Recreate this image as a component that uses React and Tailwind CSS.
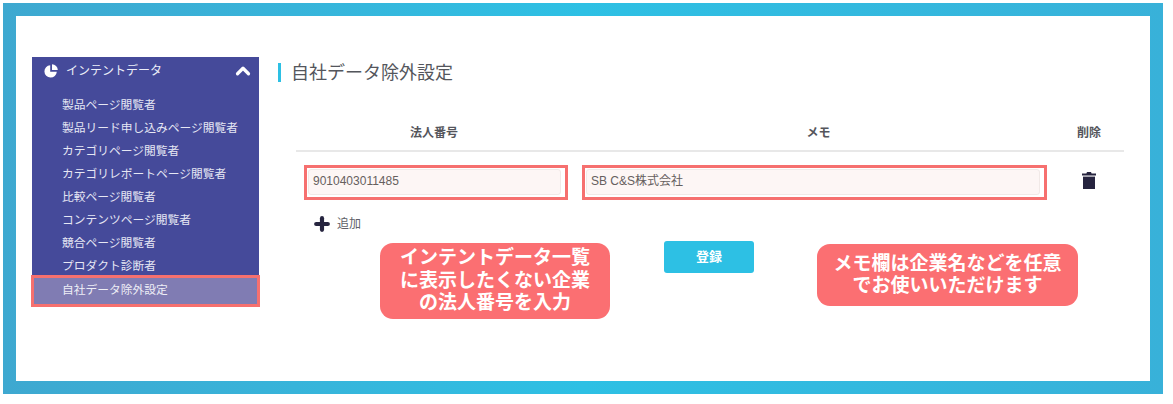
import { ChevronUp, Plus } from "lucide-react";

const FONT = "font-['Liberation_Sans','Noto_Sans_CJK_JP',sans-serif]";

const menuItems = [
  "製品ページ閲覧者",
  "製品リード申し込みページ閲覧者",
  "カテゴリページ閲覧者",
  "カテゴリレポートページ閲覧者",
  "比較ページ閲覧者",
  "コンテンツページ閲覧者",
  "競合ページ閲覧者",
  "プロダクト診断者",
];

const PieIcon = () => (
  <svg width="14" height="14" viewBox="0 0 14 14" fill="#fff">
    <path d="M6.2 1.2v6.6h6.6A6.2 6.2 0 1 1 6.2 1.2z" />
    <path d="M8 0.2A6 6 0 0 1 13.8 6H8z" />
  </svg>
);

const TrashIcon = () => (
  <svg width="14" height="17" viewBox="0 0 14 17" fill="#26243f">
    <path d="M5 0h4l.6 1.4H14v2H0v-2h4.4z" />
    <path d="M1 4.6h12V17H1z" />
  </svg>
);

const Sidebar = () => (
  <aside className="w-[227px] shrink-0 flex flex-col">
    <div className="bg-[#454a9a] h-[218px] flex flex-col">
      <div className="flex shrink-0 items-center h-[28px] pl-[12px] pr-[5px] text-white">
        <PieIcon />
        <span className="ml-[8px] text-[12px] text-[#eceef8]">インテントデータ</span>
        <ChevronUp size={22} strokeWidth={3.5} className="ml-auto" />
      </div>
      <ul className="shrink-0 pl-[30px] pt-[8px]">
        {menuItems.map((item) => (
          <li key={item} className="h-[23px] leading-[23px] text-[11.75px] text-[#e6e7f4] whitespace-nowrap">
            {item}
          </li>
        ))}
      </ul>
    </div>
    <div className="relative -mx-[1px] h-[32px] border-[3px] border-[#f6706f] bg-[#807cb3] pl-[28px] leading-[23px] text-[11.75px] text-[#eeeef6]">
      自社データ除外設定
    </div>
  </aside>
);

const Field = ({ value, className }) => (
  <div className={`h-[35px] border-[3px] border-[#f6706f] p-[1px] pb-[2px] pr-[4px] ${className}`}>
    <div className="h-full rounded-[3px] border border-[#f1e9e7] bg-[#fdf6f5] pl-[4px] pb-[3px] flex items-center text-[12px] text-[#66605e]">
      {value}
    </div>
  </div>
);

const App = () => (
  <div className={`${FONT} w-[1173px] h-[404px] bg-white pt-[3px] pl-[3px]`}>
    <div className="w-[1160px] h-[391px] p-[13px] bg-gradient-to-r from-[#3ea8d0] via-[#2dc0e4] to-[#38b1d9]">
      <div className="relative w-full h-full bg-white flex pl-[16px] pt-[41px]">
        <Sidebar />

        <main className="ml-[19px] flex-1 flex flex-col">
          <div className="flex items-center h-[19px] mt-[6px] border-l-[3px] border-[#2dc0e4] pl-[10px] pt-[2px] text-[18px] text-[#54565c]">
            自社データ除外設定
          </div>

          <div className="ml-[18px] mr-[26px] mt-[40px]">
            <div className="h-[30px] border-b-[2px] border-[#e8e8e8] flex pt-[2px] text-[12px] font-bold text-[#55565c]">
              <div className="w-[276px] text-center">法人番号</div>
              <div className="w-[465px] text-center pl-[28px]">メモ</div>
              <div className="ml-auto mr-[23px]">削除</div>
            </div>

            <div className="flex items-center mt-[13px] pl-[8px]">
              <Field value="9010403011485" className="w-[264px]" />
              <Field value="SB C&S株式会社" className="w-[465px] ml-[14px]" />
              <div className="ml-[35px] pb-[5px]">
                <TrashIcon />
              </div>
            </div>

            <div className="flex items-center mt-[14px] pl-[16px] text-[12px] text-[#605f68]">
              <Plus size={20} strokeWidth={5} color="#26243f" />
              <span className="ml-[5px]">追加</span>
            </div>

            <button className="block ml-[368px] mt-[7px] w-[90px] h-[32px] rounded-[3px] bg-[#2dc0e4] text-[13px] font-bold text-white">
              登録
            </button>
          </div>
        </main>

        <div className="absolute left-[364px] top-[227px] w-[230px] h-[76px] rounded-[13px] bg-[#fb6f72] flex items-center justify-center text-center text-[19px] leading-[22.5px] font-bold text-white whitespace-nowrap">
          <p>
            インテントデータ一覧
            <br />
            に表示したくない企業
            <br />
            の法人番号を入力
          </p>
        </div>

        <div className="absolute left-[801px] top-[228px] w-[261px] h-[62px] rounded-[13px] bg-[#fb6f72] flex items-center justify-center text-center text-[19px] leading-[22.5px] font-bold text-white whitespace-nowrap">
          <p>
            メモ欄は企業名などを任意
            <br />
            でお使いいただけます
          </p>
        </div>
      </div>
    </div>
  </div>
);

export default App;
